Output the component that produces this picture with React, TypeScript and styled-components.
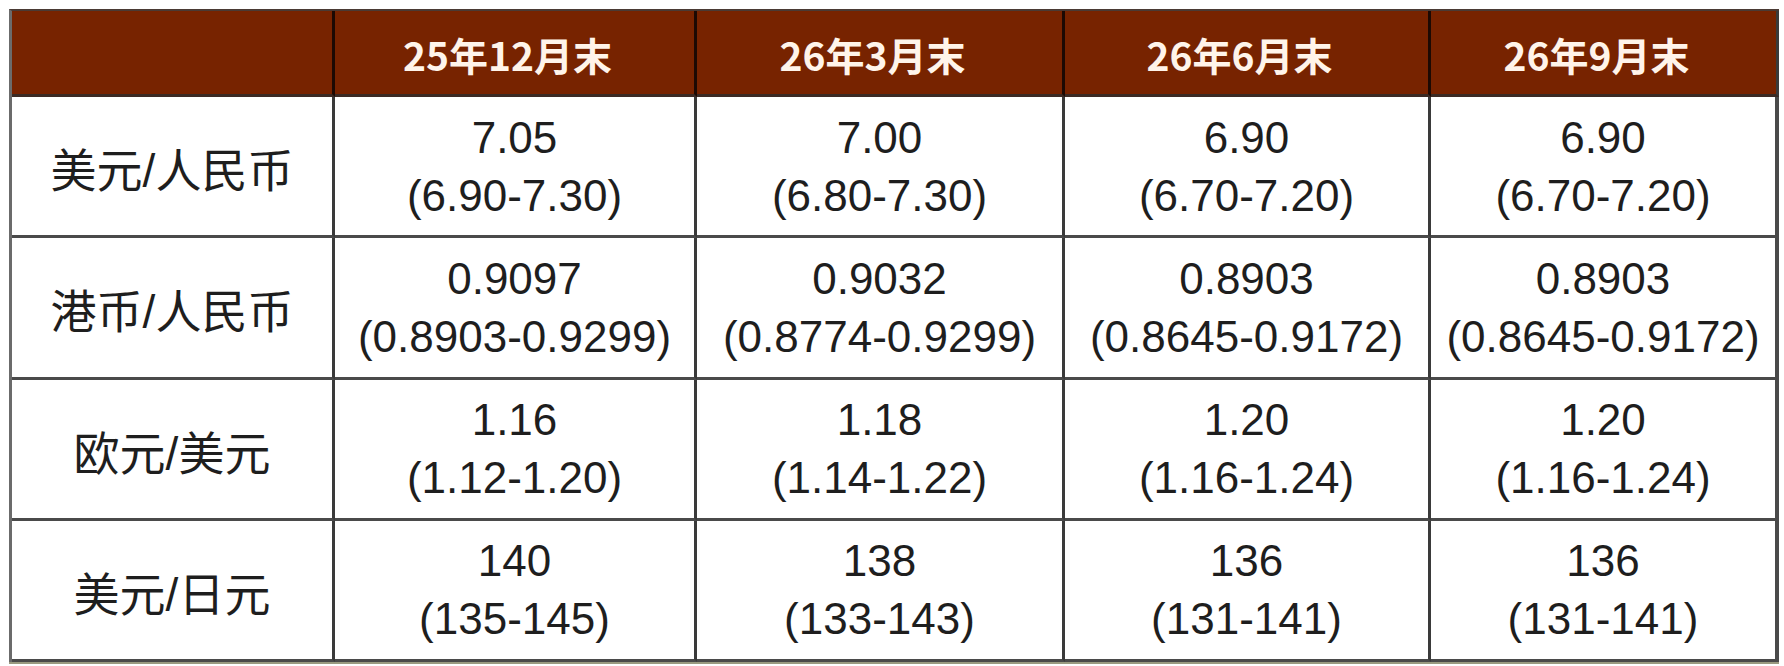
import React from "react";
import styled, { createGlobalStyle } from "styled-components";

const GlobalStyle = createGlobalStyle`
  html, body {
    margin: 0;
    padding: 0;
    background: #ffffff;
  }
  body {
    font-family: "Liberation Sans", Arial, "Noto Sans CJK SC", sans-serif;
  }
`;

const Page = styled.div`
  width: 1784px;
  height: 666px;
  padding: 9px 5px 0 9px;
  box-sizing: border-box;
  background: #ffffff;
`;

const Grid = styled.div`
  display: grid;
  grid-template-columns: 323px 362px 368px 366px 1fr;
  grid-template-rows: 86px repeat(4, 1fr);
  width: 1770px;
  height: 653px;
  box-sizing: border-box;
  border-top: 2px solid #4a3a34;
  border-left: 3px solid #6b6b6b;
  box-shadow: 0 2px 0 #9a9a80;
`;

const HeaderCell = styled.div<{ $last?: boolean }>`
  display: flex;
  align-items: center;
  justify-content: center;
  background: #772300;
  color: #fff4ea;
  font-family: "Noto Sans CJK SC", "Liberation Sans", sans-serif;
  font-weight: 700;
  font-size: 39px;
  border-right: ${(p) => (p.$last ? "3px solid #3a3a3a" : "3px solid #1c0903")};
  border-bottom: 3px solid #3b2a24;
  box-sizing: border-box;
  padding: 2px 14px 0 0;
`;

const LabelCell = styled.div`
  display: flex;
  align-items: center;
  justify-content: center;
  color: #1e1e1e;
  font-family: "Liberation Sans", "Noto Sans CJK SC", sans-serif;
  font-size: 46px;
  border-right: 3px solid #3a3a3a;
  border-bottom: 3px solid #4a4a4a;
  box-sizing: border-box;
  padding-top: 2px;
`;

const ValueCell = styled.div<{ $last?: boolean }>`
  display: flex;
  flex-direction: column;
  align-items: center;
  justify-content: center;
  color: #1e1e1e;
  font-family: "Liberation Sans", Arial, sans-serif;
  font-size: 44px;
  line-height: 58px;
  border-right: ${(p) => (p.$last ? "4px solid #4a4a4a" : "3px solid #3a3a3a")};
  border-bottom: 3px solid #4a4a4a;
  box-sizing: border-box;
  padding-top: 1px;
`;

const Line = styled.span`
  display: block;
  white-space: nowrap;
`;

const headers = ["25年12月末", "26年3月末", "26年6月末", "26年9月末"];

const rows: { label: string; values: [string, string][] }[] = [
  {
    label: "美元/人民币",
    values: [
      ["7.05", "(6.90-7.30)"],
      ["7.00", "(6.80-7.30)"],
      ["6.90", "(6.70-7.20)"],
      ["6.90", "(6.70-7.20)"],
    ],
  },
  {
    label: "港币/人民币",
    values: [
      ["0.9097", "(0.8903-0.9299)"],
      ["0.9032", "(0.8774-0.9299)"],
      ["0.8903", "(0.8645-0.9172)"],
      ["0.8903", "(0.8645-0.9172)"],
    ],
  },
  {
    label: "欧元/美元",
    values: [
      ["1.16", "(1.12-1.20)"],
      ["1.18", "(1.14-1.22)"],
      ["1.20", "(1.16-1.24)"],
      ["1.20", "(1.16-1.24)"],
    ],
  },
  {
    label: "美元/日元",
    values: [
      ["140", "(135-145)"],
      ["138", "(133-143)"],
      ["136", "(131-141)"],
      ["136", "(131-141)"],
    ],
  },
];

export default function App() {
  return (
    <>
      <GlobalStyle />
      <Page>
        <Grid>
          <HeaderCell />
          {headers.map((h, i) => (
            <HeaderCell key={h} $last={i === headers.length - 1}>
              {h}
            </HeaderCell>
          ))}
          {rows.map((row) => (
            <React.Fragment key={row.label}>
              <LabelCell>{row.label}</LabelCell>
              {row.values.map(([main, range], i) => (
                <ValueCell key={i} $last={i === row.values.length - 1}>
                  <Line>{main}</Line>
                  <Line>{range}</Line>
                </ValueCell>
              ))}
            </React.Fragment>
          ))}
        </Grid>
      </Page>
    </>
  );
}
